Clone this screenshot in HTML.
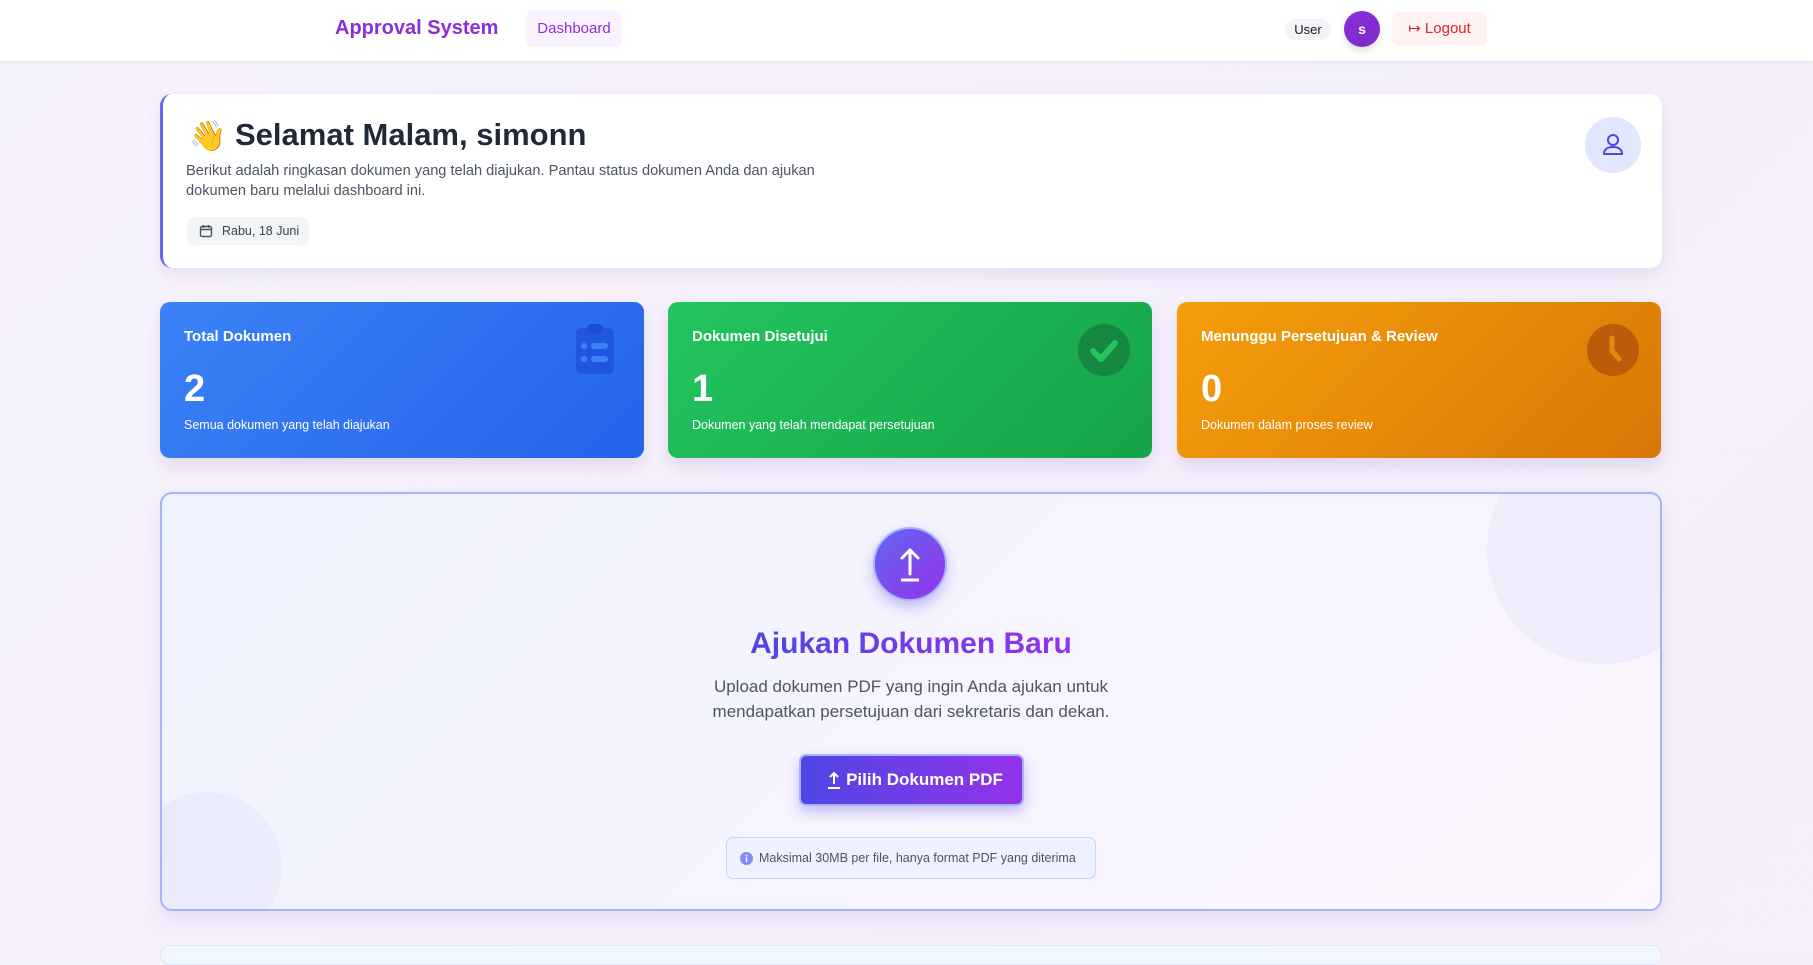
<!DOCTYPE html>
<html><head><meta charset="utf-8"><style>
*{box-sizing:border-box;margin:0;padding:0}
body{width:1813px;height:952px;overflow:hidden;font-family:"Liberation Sans",sans-serif;background:linear-gradient(135deg,#f7f3fd,#f5effd 60%,#f7effa);position:relative;color:#1f2937}
.nav{position:absolute;left:0;top:0;width:1813px;height:61px;background:#fff;box-shadow:0 1px 3px rgba(0,0,0,.08)}
.brand{position:absolute;left:335px;top:17px;font-size:20px;font-weight:700;color:#8b2fd9}
.dash{position:absolute;left:526px;top:11px;width:96px;height:36px;background:#faf3ff;border-radius:6px;color:#8b2fd9;font-size:15px;line-height:36px;text-align:center}
.user{position:absolute;left:1285px;top:19px;width:46px;height:21px;border-radius:11px;background:#f3f4f6;font-size:13px;line-height:21px;text-align:center;color:#111827}
.av{position:absolute;left:1344px;top:11px;width:36px;height:36px;border-radius:50%;background:linear-gradient(135deg,#8b2fd9,#7c2bc7);color:#fff;font-size:14px;font-weight:700;line-height:36px;text-align:center;box-shadow:0 4px 8px rgba(0,0,0,.12)}
.lo{position:absolute;left:1392px;top:12px;width:95px;height:34px;border-radius:7px;background:#fef2f2;color:#dc2626;font-size:15px;line-height:34px;text-align:center}
.hero{position:absolute;left:160px;top:94px;width:1502px;height:174px;background:#fff;border-radius:12px;border-left:3px solid #6366f1;box-shadow:0 6px 16px rgba(80,60,140,.1)}
.hero h1{position:absolute;left:72px;top:23px;font-size:31px;font-weight:700;color:#1f2937}
.emoji{position:absolute;left:26px;top:25px;font-size:30px}
.hero p{position:absolute;left:23px;top:67px;width:660px;font-size:14.6px;line-height:20px;color:#4b5563}
.date{position:absolute;left:24px;top:123px;width:122px;height:28px;background:#f3f4f6;border-radius:7px;font-size:12.5px;line-height:28px;color:#374151;padding-left:35px}
.date svg{position:absolute;left:12px;top:7px}
.hav{position:absolute;left:1422px;top:23px;width:56px;height:56px;border-radius:50%;background:#e0e7ff}
.card{position:absolute;top:302px;width:484px;height:156px;border-radius:10px;color:#fff;box-shadow:0 8px 16px rgba(60,40,120,.12)}
.card .t{position:absolute;left:24px;top:26px;font-size:15px;font-weight:600}
.card .n{position:absolute;left:24px;top:66px;font-size:38px;font-weight:700}
.card .s{position:absolute;left:24px;top:116px;font-size:12.5px}
.card svg{position:absolute}
.up{position:absolute;left:160px;top:492px;width:1502px;height:419px;border:2px solid #a5b4fc;border-radius:12px;background:linear-gradient(135deg,#eff3ff,#f7f4fe 60%,#fbf5fd);overflow:hidden;box-shadow:0 8px 20px rgba(80,60,160,.1)}
.circ{position:absolute;border-radius:50%;background:rgba(226,224,250,.4)}
.ic{position:absolute;left:711px;top:33px;width:74px;height:74px;border-radius:50%;background:linear-gradient(135deg,#6366f1,#9333ea);box-shadow:0 6px 14px rgba(99,70,230,.35);border:2px solid #a5b4fc}
.up h2{position:absolute;left:0;width:100%;top:133px;text-align:center;font-size:30px;font-weight:700}
.up h2 span{background:linear-gradient(90deg,#4f46e5,#9333ea);-webkit-background-clip:text;color:transparent}
.up p{position:absolute;left:0;width:100%;top:180px;text-align:center;font-size:17px;line-height:25px;color:#4b5563}
.btn{position:absolute;left:637px;top:260px;width:225px;height:52px;border-radius:7px;background:linear-gradient(90deg,#4f46e5,#9333ea);border:2px solid #a5b4fc;color:#fff;font-size:17px;font-weight:700;line-height:48px;text-align:center;padding-left:26px;box-shadow:0 6px 12px rgba(79,70,229,.3)}
.btn svg{position:absolute;left:25px;top:15px}
.info{position:absolute;left:564px;top:343px;width:370px;height:42px;border:1px solid #c7d2fe;border-radius:7px;background:#eef2ff;font-size:12.5px;line-height:40px;color:#4b5563;padding-left:32px}
.info svg{position:absolute;left:13px;top:14px}
.next{position:absolute;left:160px;top:945px;width:1502px;height:20px;border-radius:12px;background:#f0f7ff;border:1px solid #dbeafe}
</style></head><body>
<div class="nav">
<div class="brand">Approval System</div>
<div class="dash">Dashboard</div>
<div class="user">User</div>
<div class="av">s</div>
<div class="lo"><span style="font-size:15px">↦</span> Logout</div>
</div>
<div class="hero">
<div class="emoji">👋</div>
<h1>Selamat Malam, simonn</h1>
<p>Berikut adalah ringkasan dokumen yang telah diajukan. Pantau status dokumen Anda dan ajukan dokumen baru melalui dashboard ini.</p>
<div class="date"><svg width="14" height="14" viewBox="0 0 14 14" fill="none" stroke="#4b5563" stroke-width="1.4"><rect x="1.5" y="2.5" width="11" height="10" rx="1.5"/><path d="M1.5 5.5h11M4.5 1v3M9.5 1v3"/></svg>Rabu, 18 Juni</div>
<div class="hav"><svg width="56" height="56" viewBox="0 0 56 56" fill="none" stroke="#4f46e5" stroke-width="2"><circle cx="28" cy="23" r="5"/><path d="M19 37c0-5 4-7 9-7s9 2 9 7z"/></svg></div>
</div>
<div class="card" style="left:160px;background:linear-gradient(135deg,#3b82f6,#2563eb)">
<div class="t">Total Dokumen</div><div class="n">2</div><div class="s">Semua dokumen yang telah diajukan</div>
<svg style="left:414px;top:22px" width="42" height="52" viewBox="0 0 42 52"><rect x="2" y="4" width="38" height="46" rx="6" fill="#1d4ed8" opacity=".7"/><rect x="13" y="0" width="16" height="9" rx="4" fill="#1d4ed8"/><circle cx="10" cy="22" r="3" fill="#3b82f6"/><rect x="17" y="19" width="17" height="6" rx="3" fill="#3b82f6"/><circle cx="10" cy="35" r="3" fill="#3b82f6"/><rect x="17" y="32" width="17" height="6" rx="3" fill="#3b82f6"/></svg>
</div>
<div class="card" style="left:668px;background:linear-gradient(135deg,#22c55e,#16a34a)">
<div class="t">Dokumen Disetujui</div><div class="n">1</div><div class="s">Dokumen yang telah mendapat persetujuan</div>
<svg style="left:410px;top:22px" width="52" height="52" viewBox="0 0 52 52"><circle cx="26" cy="26" r="26" fill="#15803d" opacity=".8"/><path d="M15 27l8 8 14-16" stroke="#22c55e" stroke-width="6" fill="none" stroke-linecap="round" stroke-linejoin="round"/></svg>
</div>
<div class="card" style="left:1177px;background:linear-gradient(135deg,#f59e0b,#d97706)">
<div class="t">Menunggu Persetujuan &amp; Review</div><div class="n">0</div><div class="s">Dokumen dalam proses review</div>
<svg style="left:410px;top:22px" width="52" height="52" viewBox="0 0 52 52"><circle cx="26" cy="26" r="26" fill="#b45309" opacity=".8"/><path d="M25 14v13l7 8" stroke="#e08a0c" stroke-width="5" fill="none" stroke-linecap="round"/></svg>
</div>
<div class="up">
<div class="circ" style="left:1325px;top:-60px;width:230px;height:230px"></div>
<div class="circ" style="left:-30px;top:298px;width:150px;height:150px"></div>
<div class="ic"><svg width="70" height="70" viewBox="0 0 70 70" fill="none" stroke="#fff" stroke-width="3"><path d="M35 45V21M27 29l8-8 8 8" stroke-linecap="round" stroke-linejoin="round"/><path d="M26 51h18"/></svg></div>
<h2><span>Ajukan Dokumen Baru</span></h2>
<p>Upload dokumen PDF yang ingin Anda ajukan untuk<br>mendapatkan persetujuan dari sekretaris dan dekan.</p>
<div class="btn"><svg width="16" height="18" viewBox="0 0 16 18" fill="none" stroke="#fff" stroke-width="2"><path d="M8 13V2M4 6l4-4 4 4"/><path d="M2 17h12"/></svg>Pilih Dokumen PDF</div>
<div class="info"><svg width="13" height="13" viewBox="0 0 13 13"><circle cx="6.5" cy="6.5" r="6.5" fill="#818cf8"/><rect x="5.8" y="5.5" width="1.4" height="4.5" fill="#fff"/><circle cx="6.5" cy="3.7" r=".9" fill="#fff"/></svg>Maksimal 30MB per file, hanya format PDF yang diterima</div>
</div>
<div class="next"></div>
</body></html>
